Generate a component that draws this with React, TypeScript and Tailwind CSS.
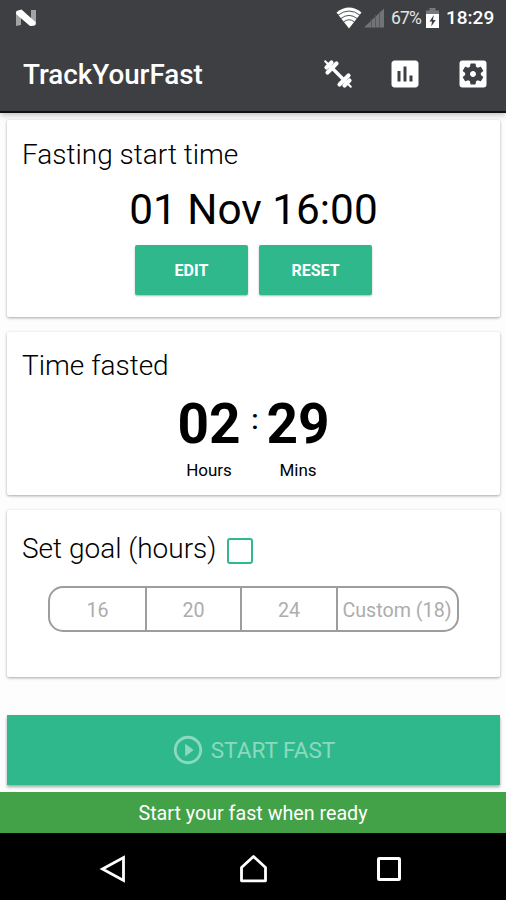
import { useState } from 'react';
import type { ReactNode } from 'react';
import { MdInsertChart, MdPlayCircleOutline, MdSettingsApplications } from 'react-icons/md';

const GOALS = [
  { label: '16', width: 'w-[97px]' },
  { label: '20', width: 'w-[95px]' },
  { label: '24', width: 'w-[96px]' },
  { label: 'Custom (18)', width: 'w-[118px]' },
];

function NougatIcon() {
  return (
    <svg width="22" height="18" viewBox="0 0 22 18">
      <path d="M1 2.5 6 1v15l-5 1z" fill="#a3a3a6" />
      <path d="M16 1h5v15l-5 1z" fill="#a3a3a6" />
      <path d="M1.5 2 6.5.5 21 13.5l-1.5 3-4.5.5L1 5z" fill="#fff" />
    </svg>
  );
}

function WifiIcon() {
  return (
    <svg width="26" height="22" viewBox="0 0 26 22">
      <path d="M0.5 5.5Q13-4.5 25.5 5.5L13 21.5z" fill="#fff" />
      <g fill="none" stroke="#3e3f42" strokeWidth="0.9">
        <path d="M2 8.2Q13-.2 24 8.2" />
        <path d="M4.8 11.6Q13 5.2 21.2 11.6" />
        <path d="M7.6 14.9Q13 10.6 18.4 14.9" />
      </g>
    </svg>
  );
}

function SignalIcon() {
  return (
    <svg width="21" height="20" viewBox="0 0 21 20">
      <path d="M0 19.5 20 .5v19z" fill="#727375" />
      <path d="M7.5 11v9M11.5 7v13M15.5 3.5v17" stroke="#58595c" strokeWidth="1" />
    </svg>
  );
}

function BatteryIcon() {
  return (
    <svg width="15" height="21" viewBox="0 0 15 21">
      <path d="M4.5 0h6v2.5H14v4H1v-4h3.5z" fill="#77787a" />
      <path d="M1 6h13v14H1z" fill="#fff" />
      <path d="M8.8 7 4.5 13.5H7L6.2 18.5 10.8 12H8z" fill="#3e3f42" />
    </svg>
  );
}

function DumbbellIcon() {
  return (
    <svg width="30" height="30" viewBox="0 0 30 30" stroke="#fff" strokeLinecap="round">
      <path d="M8 8l14 14" strokeWidth="3.4" />
      <path d="M4.5 13.5l9-9M16.5 25.5l9-9" strokeWidth="4.2" />
      <path d="M3.5 8.5l5-5M21.5 26.5l5-5" strokeWidth="4.2" />
      <path d="M2.2 2.2l3 3M24.8 24.8l3 3" strokeWidth="2" />
    </svg>
  );
}

function Card({ className, children }: { className: string; children: ReactNode }) {
  return (
    <section className={`mr-[6px] ml-[7px] rounded-[2px] bg-white px-[15px] shadow-[0_1px_3px_rgba(0,0,0,0.35)] ${className}`}>
      {children}
    </section>
  );
}

function CardTitle({ children }: { children: ReactNode }) {
  return <h2 className="text-[28px] leading-[34px] font-light whitespace-nowrap text-black">{children}</h2>;
}

export default function App() {
  const [goalEnabled, setGoalEnabled] = useState(false);

  return (
    <div className="flex h-[900px] w-[506px] flex-col overflow-hidden bg-[#fdfdfd] font-['Roboto','Liberation_Sans',sans-serif]">
      {/* Status bar and toolbar */}
      <header className="h-[113px] shrink-0 border-b-2 border-[#111] bg-[#3e3f42] text-white shadow-[0_2px_6px_rgba(0,0,0,0.25)]">
        <div className="flex h-[36px] items-center pr-[11px] pl-[15px]">
          <NougatIcon />
          <div className="ml-auto flex items-center">
            <WifiIcon />
            <span className="ml-[2px]"><SignalIcon /></span>
            <span className="ml-[6px] w-[31px] text-[17.5px] tracking-[-0.8px] text-[#e4e4e4]">67%</span>
            <span className="ml-[3px]"><BatteryIcon /></span>
            <span className="ml-[6px] w-[49px] text-[19px] font-medium">18:29</span>
          </div>
        </div>
        <div className="flex h-[75px] items-center pr-[15px] pl-[23px]">
          <h1 className="pt-[2px] text-[27.8px] leading-[34px] font-medium">TrackYourFast</h1>
          <div className="ml-auto flex items-center">
            <button aria-label="Workouts"><DumbbellIcon /></button>
            <button aria-label="Statistics" className="ml-[34px]"><MdInsertChart size={36} /></button>
            <button aria-label="Settings" className="ml-[32px]"><MdSettingsApplications size={36} /></button>
          </div>
        </div>
      </header>

      <main className="flex flex-1 flex-col">
        <Card className="mt-[7px] h-[197px] pt-[18px]">
          <CardTitle>Fasting start time</CardTitle>
          <p className="mt-[12px] text-center text-[42.3px] leading-[52px] text-black">01 Nov 16:00</p>
          <div className="mt-[9px] flex justify-center gap-[11px]">
            <button className="h-[50px] w-[113px] rounded-[2px] bg-[#2fb88c] pt-[2px] text-[16px] font-bold text-white shadow-[0_1px_2px_rgba(0,0,0,0.3)]">
              EDIT
            </button>
            <button className="h-[50px] w-[113px] rounded-[2px] bg-[#2fb88c] pt-[2px] text-[16px] font-bold text-white shadow-[0_1px_2px_rgba(0,0,0,0.3)]">
              RESET
            </button>
          </div>
        </Card>

        <Card className="mt-[15px] h-[163px] pt-[17px]">
          <CardTitle>Time fasted</CardTitle>
          <div className="mt-[8px] flex justify-center text-black">
            <div className="w-[64px] text-center">
              <p className="text-[55px] leading-[66px] font-bold">02</p>
              <p className="mt-[3px] text-[17px] leading-[20px]">Hours</p>
            </div>
            <span className="w-[25px] pl-[3px] text-center text-[28px] leading-[58px] font-medium">:</span>
            <div className="w-[64px] text-center">
              <p className="text-[55px] leading-[66px] font-bold">29</p>
              <p className="mt-[3px] text-[17px] leading-[20px]">Mins</p>
            </div>
          </div>
        </Card>

        <Card className="mt-[15px] h-[167px] pt-[22px]">
          <div className="flex items-center">
            <CardTitle>Set goal (hours)</CardTitle>
            <button
              role="checkbox"
              aria-checked={goalEnabled}
              aria-label="Set goal"
              onClick={() => setGoalEnabled(!goalEnabled)}
              className={`mt-[3px] ml-[11px] size-[26px] rounded-[3px] border-2 border-[#2fb88c] ${goalEnabled ? 'bg-[#2fb88c]' : ''}`}
            />
          </div>
          <div className="mt-[20px] ml-[26px] flex h-[46px] w-[411px] divide-x-2 divide-[#9d9d9d] overflow-hidden rounded-[15px] border-2 border-[#9d9d9d]">
            {GOALS.map((goal) => (
              <button key={goal.label} className={`${goal.width} shrink-0 pt-[3px] text-[19.7px] whitespace-nowrap text-[#adadad]`}>
                {goal.label}
              </button>
            ))}
          </div>
        </Card>

        <button
          disabled={!goalEnabled}
          className="mt-[38px] mr-[6px] ml-[7px] flex h-[70px] items-center justify-center bg-[#2fb88c] text-[22.6px] text-[#8bd9bf] shadow-[0_2px_3px_rgba(0,0,0,0.35)]"
        >
          <MdPlayCircleOutline size={34} />
          <span className="mr-px ml-[6px] pt-[2px]">START FAST</span>
        </button>
      </main>

      <div className="flex h-[41px] shrink-0 items-center justify-center bg-[#43a147] pt-[3px] text-[19.7px] text-white">
        Start your fast when ready
      </div>

      {/* Navigation bar */}
      <nav className="flex h-[67px] shrink-0 items-center bg-black pt-[4px] pl-[99px]">
        <svg width="28" height="30" viewBox="0 0 28 30" fill="none" stroke="#fff" strokeWidth="2.8">
          <path d="M3.5 15 24.5 3.5v23z" />
        </svg>
        <svg className="ml-[112px]" width="30" height="30" viewBox="0 0 30 30" fill="none" stroke="#fff" strokeWidth="2.8">
          <path d="M2.5 26.8V13.5L14.5 2.5l12 11v13.3z" strokeLinejoin="round" />
        </svg>
        <svg className="ml-[107px]" width="26" height="26" viewBox="0 0 26 26" fill="none" stroke="#fff" strokeWidth="3">
          <rect x="2.5" y="2.5" width="21" height="21" rx="0.8" />
        </svg>
      </nav>
    </div>
  );
}
